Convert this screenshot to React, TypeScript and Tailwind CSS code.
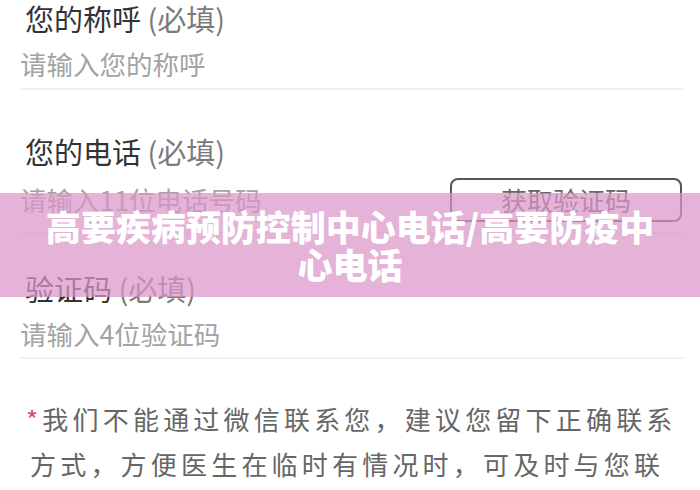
import React from "react";

const font = { fontFamily: '"Noto Sans CJK SC", "Noto Sans", sans-serif' };

export default function App() {
  return (
    <div className="relative w-[700px] h-[490px] overflow-hidden bg-white" style={font}>
      {/* Name */}
      <div className="ml-[25px] text-[29px] leading-[36px] text-[#333]">
        您的称呼 <span className="text-[#7a7a7a]">(必填)</span>
      </div>
      <div className="mt-[11px] ml-[20px] text-[26.5px] leading-[34px] text-[#a3a3a3]">请输入您的称呼</div>
      <div className="mt-[7px] ml-[20px] mr-[17px] h-[2px] bg-[#f1f1f1]" />

      {/* Phone */}
      <div className="mt-[43px] ml-[25px] text-[29px] leading-[36px] text-[#333]">
        您的电话 <span className="text-[#7a7a7a]">(必填)</span>
      </div>
      <div className="mt-[9px] flex items-center h-[44px]">
        <div className="ml-[20px] text-[26.5px] leading-[34px] text-[#a3a3a3]">请输入11位电话号码</div>
        <div className="ml-auto mr-[18px] w-[232px] h-[44px] rounded-[8px] border-2 border-[#555] flex items-center justify-center text-[26px] leading-none text-[#666]">
          获取验证码
        </div>
      </div>
      <div className="mt-[10px] ml-[20px] mr-[17px] h-[2px] bg-[#f1f1f1]" />

      {/* Code */}
      <div className="mt-[36px] ml-[25px] text-[29px] leading-[36px] text-[#333]">
        验证码 <span className="text-[#7a7a7a]">(必填)</span>
      </div>
      <div className="mt-[11px] ml-[20px] text-[26.5px] leading-[34px] text-[#a3a3a3]">请输入4位验证码</div>
      <div className="mt-[6px] ml-[20px] mr-[17px] h-[2px] bg-[#f1f1f1]" />

      {/* Note */}
      <div className="mt-[37px] ml-[26px] text-[26px] leading-[45px] tracking-[4.2px] text-[#666] whitespace-nowrap">
        <div>
          <span className="text-[#e0457b]">*</span>我们不能通过微信联系您，建议您留下正确联系
        </div>
        <div className="ml-[4px]">方式，方便医生在临时有情况时，可及时与您联</div>
        <div className="ml-[4px]">系，避免您往返奔波</div>
      </div>

      {/* Overlay banner */}
      <div className="absolute left-0 right-0 top-[193px] h-[104px] bg-[rgba(217,149,199,0.72)] flex items-center justify-center">
        <div className="text-center text-white font-black text-[35px] leading-[38px]">
          高要疾病预防控制中心电话/高要防疫中
          <br />
          心电话
        </div>
      </div>
    </div>
  );
}
